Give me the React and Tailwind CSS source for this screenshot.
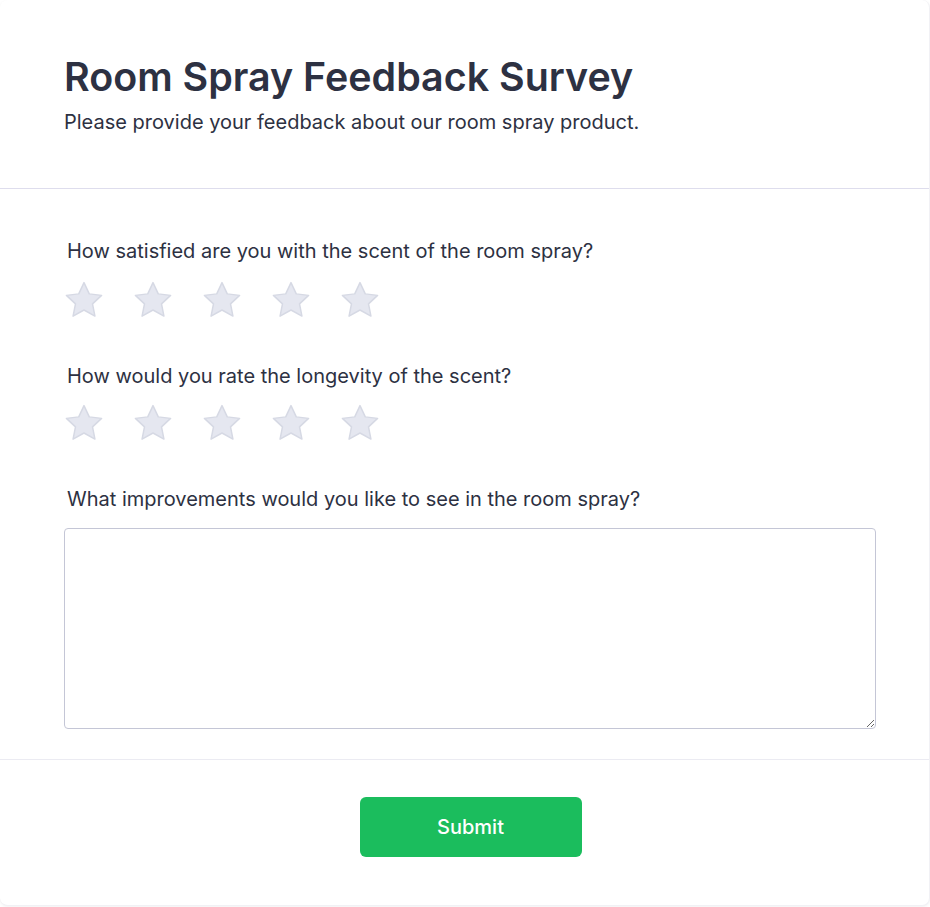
import React, { useState } from "react";

function Star({ filled, onClick }) {
  return (
    <button type="button" onClick={onClick} className="w-10 h-10 flex items-center justify-center">
      <svg viewBox="1.2 1.2 21.6 21.6" className="w-10 h-10">
        <path
          d="M12 2.6l2.85 6.1 6.65.8-4.9 4.6 1.3 6.6L12 17.4l-5.9 3.3 1.3-6.6-4.9-4.6 6.65-.8z"
          fill={filled ? "#facc15" : "#e5e7f0"}
          stroke={filled ? "#eab308" : "#d6d9e4"}
          strokeWidth="0.8"
          strokeLinejoin="round"
        />
      </svg>
    </button>
  );
}

function Rating({ value, setValue }) {
  return (
    <div className="flex gap-[29px]">
      {[1, 2, 3, 4, 5].map((n) => (
        <Star key={n} filled={n <= value} onClick={() => setValue(n)} />
      ))}
    </div>
  );
}

export default function App() {
  const [scent, setScent] = useState(0);
  const [longevity, setLongevity] = useState(0);
  const [text, setText] = useState("");

  return (
    <div className="min-h-screen bg-white font-['Inter',sans-serif] text-[#2d3142]">
      <div className="w-full rounded-lg bg-white shadow-[0_1px_3px_rgba(0,0,0,0.06)] border-r border-b border-[#f1f1f5]">
        {/* header */}
        <div className="px-16 pt-[57px] pb-[52px] border-b border-[#dedded]">
          <h1 className="text-[39.4px] leading-10 font-semibold mb-[11px]">Room Spray Feedback Survey</h1>
          <p className="text-xl leading-7">Please provide your feedback about our room spray product.</p>
        </div>

        {/* questions */}
        <div className="pl-16 pr-[53px] pt-12 pb-[30px] border-b border-[#ebebf2]">
          <p className="text-xl leading-7 pl-[3px] mb-[15px]">
            How satisfied are you with the scent of the room spray?
          </p>
          <div className="mb-[42px]">
            <Rating value={scent} setValue={setScent} />
          </div>

          <p className="text-xl leading-7 pl-[3px] mb-[13px]">
            How would you rate the longevity of the scent?
          </p>
          <div className="mb-[42px]">
            <Rating value={longevity} setValue={setLongevity} />
          </div>

          <p className="text-xl leading-7 pl-[3px] mb-[15px]">
            What improvements would you like to see in the room spray?
          </p>
          <textarea
            value={text}
            onChange={(e) => setText(e.target.value)}
            className="block w-full h-[201px] rounded border border-[#c4c6d6] p-3 text-base outline-none"
          />
        </div>

        {/* footer */}
        <div className="flex justify-center pl-3 pt-[37px] pb-[48px]">
          <button className="w-[222px] h-[60px] rounded-md bg-[#1bbd5d] text-white text-xl font-medium">
            Submit
          </button>
        </div>
      </div>
    </div>
  );
}
